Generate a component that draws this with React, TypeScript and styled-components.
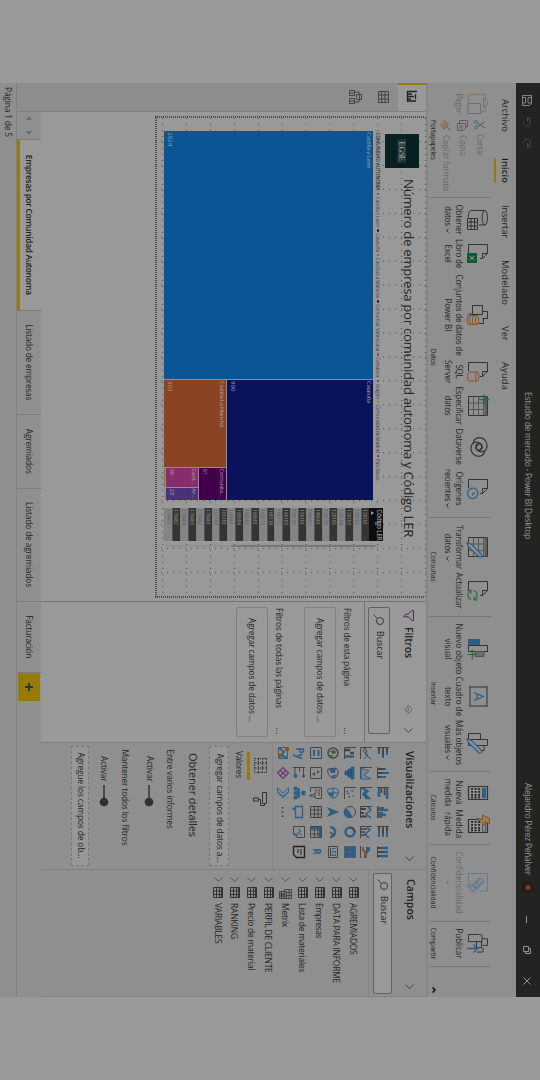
import React, { useLayoutEffect, useRef, useState } from "react";
import styled, { createGlobalStyle } from "styled-components";

const Global = createGlobalStyle`
  html, body { margin: 0; padding: 0; background: #999; }
  body { width: 540px; height: 1080px; overflow: hidden; }
  * { box-sizing: border-box; }
`;

const ink = "#262626";
const soft = "#686868";
const panel = "#8f8f8f";
const paper = "#999999";
const line = "#808080";
const blue = "#2c5f88";
const orange = "#8f5117";
const green = "#2a6b36";
const gold = "#957b0a";

/* ---------- text ---------- */

const Span = styled.span<{ $s: number; $c: string; $b: number }>`
  display: inline-block;
  flex: none;
  white-space: pre;
  line-height: 1.3;
  font-family: "Open Sans", "Noto Sans", sans-serif;
  font-size: ${(p) => p.$s}px;
  font-weight: ${(p) => p.$b};
  color: ${(p) => p.$c};
`;

type TProps = { w?: number; s?: number; c?: string; b?: number; children: string };

/* Text tracked so that it fills the given width. */
function T({ w, s = 8.4, c = ink, b = 400, children }: TProps) {
  const ref = useRef<HTMLSpanElement>(null);
  const [track, setTrack] = useState(0);
  useLayoutEffect(() => {
    if (!ref.current || !w) return;
    const natural = parseFloat(getComputedStyle(ref.current).width);
    setTrack((w - natural) / children.length);
  }, []);
  return (
    <Span ref={ref} $s={s} $c={c} $b={b} style={{ letterSpacing: `${track}px` }}>
      {children}
    </Span>
  );
}

/* ---------- icons ---------- */

const Svg = styled.svg<{ $c?: string }>`
  display: block;
  flex: none;
  overflow: visible;
  fill: none;
  stroke: ${(p) => p.$c || "#333"};
  stroke-width: 1;
`;

function Icon({ w, h = w, c, children }: { w: number; h?: number; c?: string; children: React.ReactNode }) {
  return (
    <Svg width={w} height={h} viewBox={`0 0 ${w} ${h}`} $c={c}>
      {children}
    </Svg>
  );
}

const Chevron = ({ c = "#444" }: { c?: string }) => (
  <Icon w={5} h={9} c={c}><path d="M.5 .5 4.5 4.5 .5 8.5" /></Icon>
);
const Search = () => (
  <Icon w={11} h={11} c="#3a3a3a"><circle cx="7" cy="4" r="3.5" /><path d="M4.5 6.5.5 10.5" /></Icon>
);
const doc = "M14.5 8V5.5L9.5.5H.5v19H9M9.5.5v5h5";

const DataIcon = () => (
  <Icon w={20} h={21}>
    <ellipse cx="7.7" cy="3.2" rx="7.2" ry="2.7" />
    <path d="M.5 3.2V17c0 1.5 3 2.7 7 2.7M14.9 3.2V9" />
    <path d="M8.5 10.5h11v10h-11zM8.5 13.5h11M8.5 17h11M12 10.5v10M16 10.5v10" />
  </Icon>
);
const ExcelIcon = () => (
  <Icon w={19} h={21}>
    <path d={doc} />
    <rect x="9" y="11" width="10" height="10" fill="#0d5a2c" stroke="none" />
    <path d="M12 13.5l4 5M16 13.5l-4 5" stroke="#999" />
  </Icon>
);
const PbiIcon = () => (
  <Icon w={20} h={21}>
    <path d="M6.5 5.5V.5h7v5M.5 5.5h9v10h-9zM13.5 4.5h5v5M9 15.5v4" />
    <path d="M10.5 11v8c0 2.4 9 2.4 9 0v-8M10.5 14c0 2 9 2 9 0M10.5 16.8c0 2 9 2 9 0" stroke={orange} />
    <ellipse cx="15" cy="11" rx="4.5" ry="1.6" stroke={orange} />
  </Icon>
);
const SqlIcon = () => (
  <Icon w={20} h={21}>
    <path d={doc} />
    <ellipse cx="14.5" cy="10.7" rx="4.5" ry="1.7" stroke={orange} />
    <path d="M10 10.7v8c0 2.4 9 2.4 9 0v-8" stroke={orange} />
  </Icon>
);
const TableIcon = ({ extra }: { extra?: React.ReactNode }) => (
  <Icon w={20} h={21}>
    <path d="M.5 .5h19v19H.5z" />
    <path d="M.5 2.2h19" stroke="#5d5d5d" strokeWidth="2.6" />
    <path d="M.5 4.5h19M.5 9.5h19M.5 14.5h19M7 4v15M13.5 4v15" stroke="#555" />
    {extra}
  </Icon>
);
const pencil = (
  <path d="M6 21l1.2-4.2L17.5 6.5c1.5-1 3.4.8 2.4 2.4L9.8 19.4z" fill="#8a9298" stroke={blue} strokeWidth="1.2" />
);
const SpiralIcon = () => (
  <Icon w={20} h={18}>
    <path d="M12.5 8.5a3 3 0 1 0-3 3.6c3 0 5.4-2.3 5.4-5.5C14.9 3 12 1 8.5 1 4 1 .7 4.5.7 8.7c0 3.8 2.8 6 5.8 6" strokeWidth="1.2" />
    <path d="M7.5 9.5a3 3 0 1 0 3-3.6c-3 0-5.4 2.3-5.4 5.5 0 3.6 2.9 5.6 6.4 5.6 4.5 0 7.8-3.5 7.8-7.7 0-3.8-2.8-6-5.8-6" strokeWidth="1.2" />
  </Icon>
);
const RecentIcon = () => (
  <Icon w={20} h={21}>
    <path d={doc} />
    <circle cx="14.3" cy="15.3" r="5.2" fill={panel} stroke={blue} strokeWidth="1.2" />
    <path d="M14.3 12.5v3h2.5" stroke={blue} />
  </Icon>
);
const RefreshIcon = () => (
  <Icon w={20} h={21}>
    <path d={doc} />
    <path d="M9.5 15c.5-5 7.5-5.5 9.3-1M18.5 17c-1.5 4-8 4.2-9-.5M19 10.5V14h-3.5M9.3 20.5V17h3.5" stroke={green} strokeWidth="1.2" />
  </Icon>
);
const NewVisualIcon = () => (
  <Icon w={20} h={21}>
    <rect x=".5" y="8.5" width="6" height="11" fill={blue} stroke={blue} />
    <path d="M6.5 .5h6v19h-6z" />
    <path d="M12.5 4h5v9h-5z" fill="#6d6d6d" stroke="#555" />
    <path d="M15.5 11v9.5M10.5 15.7h10" stroke={green} strokeWidth="1.2" />
  </Icon>
);
const TextBoxIcon = () => (
  <Icon w={21} h={19}>
    <path d="M1 1h19v17H1z" />
    <path d="M6.5 14 10.5 5l4 9M8 11h5" stroke={blue} strokeWidth="1.3" />
    <path d="M0 0h2v2H0zM19 0h2v2h-2zM0 17h2v2H0zM19 17h2v2h-2z" fill={blue} stroke="none" />
  </Icon>
);
const MoreVisualIcon = () => (
  <Icon w={20} h={21}>
    <path d="M.5 7.5h6v12h-6zM6.5 .5h6v19h-6zM12.5 4h5v4" />
    {pencil}
  </Icon>
);
const CalcIcon = ({ bolt }: { bolt?: boolean }) => (
  <Icon w={bolt ? 18 : 14} h={21}>
    <path d={bolt ? "M4.5 .5h13v19h-13z" : "M.5 .5h13v19H.5z"} strokeWidth="1.2" />
    <rect x={bolt ? 8 : 2.5} y="2.5" width={bolt ? 8 : 9} height="3" stroke={bolt ? "#555" : blue} fill={bolt ? "none" : blue} />
    {[8, 11.5, 15].map((y) => [2, 5, 8, 10.5].map((x) => (
      <rect key={`${x}-${y}`} x={x + (bolt ? 4 : 0)} y={y} width="1.8" height="1.9" fill="#222" stroke="none" />
    )))}
    {bolt && <path d="M3.5-1.5h5L6.5 3h4.500L3 11l1.500-5.500H0z" fill="#94805e" stroke={orange} />}
  </Icon>
);
const SensitivityIcon = () => (
  <Icon w={19} h={21} c="#5f7c8e">
    <path d="M18 8V.5H.5v19H9" />
    <path d="M4.5 8l4-4 7 7-4 4zM7 8l5 5M9 6l5 5M12 16l4-4 3 3-4 4zM10 17.5l4 4" strokeWidth="1.2" />
  </Icon>
);
const PublishIcon = () => (
  <Icon w={20} h={21}>
    <path d="M5 5.5V.5h7v5M.5 8.5c0-2 .5-2.5 1.5-2.5h6v13.5H.5zM8 6.5h6.5v5H8M14.5 5H19v6" transform="scale(.95 1)" />
    <path d="M14.5 10v10.500M10.500 16.500l4 4 4-4" stroke={blue} strokeWidth="1.300" transform="matrix(1 0 0 -1 0 31)" />
  </Icon>
);
const PasteIcon = () => (
  <Icon w={20} h={21} c="#6e6e6e">
    <path d="M11 19.5H.5V2.5H4M14 2.5h3.5V7" stroke="#93785a" strokeWidth="1.3" />
    <path d="M4.5 4.500V2.500H6.500C7-.3 11-.3 11.500 2.500H13.500v2zM9.500 7.500h10v12.500h-10z" />
  </Icon>
);
const CutIcon = () => (
  <Icon w={10} h={11} c="#5c5c5c">
    <path d="M1.5 0 7 8M8 0 2.5 8" /><circle cx="2" cy="9" r="1.5" stroke="#47728f" /><circle cx="7.5" cy="9" r="1.5" stroke="#47728f" />
  </Icon>
);
const CopyIcon = () => (
  <Icon w={11} h={11} c="#5c5c5c">
    <path d="M3 8.5H.5v-8h6.5V2M3.5 2.5h4l3 2.5v5.5h-7zM5 6h4M5 8h4" />
  </Icon>
);
const BrushIcon = () => (
  <Icon w={11} h={11} c="#5c5c5c">
    <path d="M10.5 .5 7 4M4.5 2.5l4.5 4.5-1.5 1.2-4.2-4.2z" /><path d="M3 4 .5 6l4.5 4.5L7.5 8z" fill="#967c62" stroke="#8f6c4a" />
  </Icon>
);

/* ---------- shell ---------- */

const Stage = styled.div`
  width: 1080px;
  height: 540px;
  padding: 0 83px;
  transform-origin: 0 0;
  transform: translateX(540px) rotate(90deg);
  background: ${paper};
`;
const Window = styled.div`
  width: 914px;
  height: 540px;
  display: flex;
  flex-direction: column;
  background: ${panel};
  overflow: hidden;
`;
const Slot = styled.div<{ $ml?: number }>`
  display: flex;
  flex: none;
  margin-left: ${(p) => p.$ml || 0}px;
`;
const TitleBar = styled.header`
  height: 24px;
  flex: none;
  display: flex;
  align-items: center;
  padding: 1px 12px 0 12px;
  background: #232321;
`;
const Fill = styled.div`flex: 1;`;
const Avatar = styled.div`
  width: 11px;
  height: 11px;
  border-radius: 50%;
  background: radial-gradient(circle at 50% 45%, #6b4a3e 0 1.5px, #3a1c14 3px, #24120d 6px);
`;
const TabStrip = styled.nav`
  height: 22px;
  flex: none;
  display: flex;
  padding-left: 16px;
`;
const RibbonTab = styled.div<{ $ml?: number; $on?: boolean }>`
  height: 22px;
  margin-left: ${(p) => p.$ml || 0}px;
  padding-top: 2px;
  display: flex;
  align-items: center;
  border-bottom: 2.5px solid ${(p) => (p.$on ? gold : "transparent")};
`;
const Ribbon = styled.div`
  height: 68px;
  flex: none;
  display: flex;
  padding-top: 3px;
  border-bottom: 2px solid #868686;
`;
const Group = styled.section<{ $w: number }>`
  width: ${(p) => p.$w}px;
  flex: none;
  height: 62px;
  display: flex;
  flex-direction: column;
  align-items: center;
  border-right: 1px solid #777;
`;
const GroupBody = styled.div<{ $pl?: number }>`
  height: 54px;
  flex: none;
  width: 100%;
  display: flex;
  padding-top: 3px;
  padding-left: ${(p) => p.$pl ?? 0}px;
  justify-content: ${(p) => (p.$pl == null ? "center" : "flex-start")};
`;
const Tool = styled.div<{ $w: number }>`
  width: ${(p) => p.$w}px;
  flex: none;
  display: flex;
  flex-direction: column;
  align-items: center;
`;
const ToolIcon = styled.div`height: 24px; flex: none; display: flex;`;
const ToolLine = styled.div`
  height: 11px;
  flex: none;
  display: flex;
  align-items: center;
  justify-content: center;
  gap: 2px;
`;
const SmallTools = styled.div`display: flex; flex-direction: column; width: 72px;`;
const SmallTool = styled.div`display: flex; align-items: center; height: 17px; gap: 4px;`;

const Caret = ({ c = ink }: { c?: string }) => (
  <Icon w={5} h={4} c={c}><path d="M.5 .5l2 2 2-2" /></Icon>
);

type ToolDef = { w: number; icon: React.ReactNode; a: string; aw: number; b?: string; bw?: number; caret?: boolean; dim?: boolean };
function ToolButton({ w, icon, a, aw, b, bw, caret, dim }: ToolDef) {
  const c = dim ? soft : ink;
  return (
    <Tool $w={w}>
      <ToolIcon>{icon}</ToolIcon>
      <ToolLine><T w={aw} s={8.1} c={c}>{a}</T></ToolLine>
      <ToolLine>{b && <T w={bw} s={8.1} c={c}>{b}</T>}{caret && <Caret c={c} />}</ToolLine>
    </Tool>
  );
}

const groups: { w: number; label: string; lw: number; pl?: number; tools: ToolDef[] }[] = [
  { w: 320, label: "Datos", lw: 17, pl: 5, tools: [
    { w: 34, icon: <DataIcon />, a: "Obtener", aw: 30, b: "datos", bw: 20, caret: true },
    { w: 34, icon: <ExcelIcon />, a: "Libro de", aw: 29, b: "Excel", bw: 18 },
    { w: 89, icon: <PbiIcon />, a: "Conjuntos de datos de", aw: 81, b: "Power BI", bw: 33 },
    { w: 24, icon: <SqlIcon />, a: "SQL", aw: 14, b: "Server", bw: 23 },
    { w: 44, icon: <TableIcon extra={<path d="M3.5-1.5v11M-1.5 4h11" stroke={green} strokeWidth="1.5" />} />, a: "Especificar", aw: 38, b: "datos", bw: 20 },
    { w: 38, icon: <SpiralIcon />, a: "Dataverse", aw: 36 },
    { w: 46, icon: <RecentIcon />, a: "Orígenes", aw: 34, b: "recientes", bw: 32, caret: true },
  ] },
  { w: 99, label: "Consultas", lw: 30, pl: 5, tools: [
    { w: 49, icon: <TableIcon extra={pencil} />, a: "Transformar", aw: 44, b: "datos", bw: 20, caret: true },
    { w: 38, icon: <RefreshIcon />, a: "Actualizar", aw: 36 },
  ] },
  { w: 155, label: "Insertar", lw: 23, pl: 6, tools: [
    { w: 53, icon: <NewVisualIcon />, a: "Nuevo objeto", aw: 51, b: "visual", bw: 21 },
    { w: 42, icon: <TextBoxIcon />, a: "Cuadro de", aw: 40, b: "texto", bw: 19 },
    { w: 50, icon: <MoreVisualIcon />, a: "Más objetos", aw: 45, b: "visuales", bw: 28, caret: true },
  ] },
  { w: 73, label: "Cálculos", lw: 26, pl: 5, tools: [
    { w: 32, icon: <CalcIcon />, a: "Nueva", aw: 24, b: "medida", bw: 28 },
    { w: 31, icon: <CalcIcon bolt />, a: "Medida", aw: 29, b: "rápida", bw: 24 },
  ] },
  { w: 77, label: "Confidencialidad", lw: 52, tools: [
    { w: 70, icon: <SensitivityIcon />, a: "Confidencialidad", aw: 62, caret: true, dim: true },
  ] },
  { w: 45, label: "Compartir", lw: 32, tools: [
    { w: 40, icon: <PublishIcon />, a: "Publicar", aw: 30 },
  ] },
];

/* ---------- body ---------- */

const Body = styled.div`height: 409px; flex: none; display: flex;`;
const Rail = styled.aside`
  width: 29px;
  flex: none;
  background: #8d8d8d;
  border-right: 1px solid ${line};
`;
const RailItem = styled.div<{ $on?: boolean }>`
  height: 28.2px;
  padding-right: 1px;
  display: flex;
  align-items: center;
  justify-content: center;
  background: ${(p) => (p.$on ? paper : "transparent")};
  box-shadow: inset ${(p) => (p.$on ? "2px" : "0")} 0 0 ${gold};
`;
const Main = styled.div`width: 885px; flex: none; display: flex; flex-direction: column;`;
const Work = styled.div`height: 385px; flex: none; display: flex;`;
const Canvas = styled.main`
  width: 490px;
  flex: none;
  padding-left: 4px;
  background: ${paper};
  border-right: 1px solid #747474;
`;
const Page = styled.div`
  position: relative;
  width: 481.5px;
  height: 271px;
  background:
    repeating-linear-gradient(180deg, #4c4c4c 0 1px, transparent 1px 2px) 0 2px / 2px 100% no-repeat,
    repeating-linear-gradient(180deg, #4c4c4c 0 1px, transparent 1px 2px) 100% 2px / 2px 100% no-repeat,
    repeating-linear-gradient(90deg, #4c4c4c 0 1px, transparent 1px 2px) 0 100% / 100% 2px no-repeat,
    radial-gradient(circle at .5px .5px, #4e4e4e .6px, transparent .8px) 1px 0 / 23.95px 6px,
    radial-gradient(circle at .5px .5px, #4e4e4e .6px, transparent .8px) 2px 0 / 6px 23.9px;
`;
const Visual = styled.div<{ $x: number; $y: number; $w: number; $h: number }>`
  position: absolute;
  left: ${(p) => p.$x}px;
  top: ${(p) => p.$y}px;
  width: ${(p) => p.$w}px;
  height: ${(p) => p.$h}px;
`;
const Logo = styled.div`
  width: 34px;
  height: 34px;
  display: flex;
  align-items: center;
  justify-content: center;
  background: #06211f;
`;
const LogoMark = styled.div`
  width: 24px;
  height: 9px;
  display: flex;
  align-items: center;
  justify-content: center;
  border-radius: 1px;
  background: #1c3331;
  color: #8d9392;
  font: 700 8px/9px "Liberation Serif", serif;
  letter-spacing: -0.5px;
`;
const Legend = styled.div`
  height: 9px;
  display: flex;
  align-items: center;
  padding-left: 1px;
  background: ${paper};
`;
const LegendItem = styled.div<{ $w: number }>`
  width: ${(p) => p.$w}px;
  flex: none;
  display: flex;
  align-items: center;
  gap: 1.5px;
`;
const Dot = styled.i<{ $c: string }>`
  width: 2.4px;
  height: 2.4px;
  border-radius: 50%;
  background: ${(p) => p.$c};
`;
const Tree = styled.div`display: flex; gap: 1px; height: 209.5px; background: #8f8f8f;`;
const Col = styled.div<{ $w?: number }>`
  display: flex;
  flex-direction: column;
  gap: 1px;
  ${(p) => (p.$w ? `width: ${p.$w}px; flex: none;` : "flex: 1;")}
`;
const Row = styled.div<{ $h?: number }>`
  display: flex;
  gap: 1px;
  ${(p) => (p.$h ? `height: ${p.$h}px; flex: none;` : "flex: 1;")}
`;
const CellBox = styled.div<{ $bg: string; $w?: number; $h?: number }>`
  background: ${(p) => p.$bg};
  ${(p) => (p.$w ? `width: ${p.$w}px; flex: none;` : p.$h ? `height: ${p.$h}px; flex: none;` : "flex: 1;")}
  display: flex;
  flex-direction: column;
  align-items: flex-start;
  justify-content: space-between;
  padding: 1px;
`;
function Cell({ bg, w, h, name, nw, val, vw }: { bg: string; w?: number; h?: number; name: string; nw: number; val: string; vw: number }) {
  return (
    <CellBox $bg={bg} $w={w} $h={h}>
      <T s={5.8} w={nw} c="#a3a3a3">{name}</T>
      <T s={6} w={vw} c="#a3a3a3">{val}</T>
    </CellBox>
  );
}
const YellowSliver = styled.div`height: 1px; width: 19px; background: #857a35;`;

const TableHead = styled.div`
  height: 14px;
  padding: 0 1px;
  background: #0d0d0d;
  line-height: 0;
`;
const CodeRow = styled.div<{ $dark: boolean }>`
  height: 7.87px;
  display: flex;
  align-items: center;
  padding-left: 1px;
  background: ${(p) => (p.$dark ? "#343432" : "#848484")};
  box-shadow: inset 0 -0.5px 0 #777;
`;
const Scroll = styled.div`width: 2.5px; height: 218px; background: #909090; padding-top: 7px;`;
const Thumb = styled.div`height: 145px; background: #777; border-radius: 1px;`;

const codes = ["120101", "120102", "120103", "120104", "120105", "120199", "140601", "140602", "150101", "150102", "160103", "160117", "160118", "160119", "160601", "160602", "160604", "160801", "161101", "161104", "170401", "170402", "170403", "170404", "170407", "170411"];

const legend: [string, string, number, number][] = [
  ["Castilla y León", "#0b5595", 30, 36.5],
  ["Cataluña", "#0b125c", 18.5, 24.5],
  ["Castilla La Mancha", "#a0440f", 40, 46.5],
  ["Comunitat Valenciana", "#42004a", 47, 53],
  ["Cantabria", "#982c74", 19.5, 26.5],
  ["Aragón", "#432a8c", 15.5, 21],
  ["Comunidad de Madrid", "#998000", 48, 54.5],
  ["País Vasco", "#9c1f28", 21.5, 25],
];

/* ---------- panes ---------- */

const Pane = styled.section<{ $w: number; $bg?: string }>`
  width: ${(p) => p.$w}px;
  flex: none;
  display: flex;
  flex-direction: column;
  background: ${(p) => p.$bg || panel};
  border-right: 1px solid ${line};
`;
const PaneHead = styled.div<{ $h: number; $pl: number; $pr: number }>`
  height: ${(p) => p.$h}px;
  flex: none;
  display: flex;
  align-items: center;
  padding: 0 ${(p) => p.$pr}px 1px ${(p) => p.$pl}px;
`;
const SearchBox = styled.div<{ $w: number; $h: number; $ml: number; $pl: number }>`
  width: ${(p) => p.$w}px;
  height: ${(p) => p.$h}px;
  flex: none;
  margin-left: ${(p) => p.$ml}px;
  padding-left: ${(p) => p.$pl}px;
  display: flex;
  align-items: center;
  gap: 6px;
  background: ${paper};
  border: 1px solid #626262;
  border-radius: 2px;
`;
const Rule = styled.div<{ $mt: number; $c?: string }>`
  height: 1px;
  flex: none;
  margin-top: ${(p) => p.$mt}px;
  background: ${(p) => p.$c || line};
`;
const FilterHead = styled.div<{ $mt: number }>`
  height: 12px;
  flex: none;
  margin-top: ${(p) => p.$mt}px;
  display: flex;
  align-items: center;
  justify-content: space-between;
  padding: 0 7px 0 6px;
`;
const FilterBox = styled.div`
  width: 130px;
  height: 32px;
  flex: none;
  margin: 5px 0 0 5px;
  padding-left: 10px;
  display: flex;
  align-items: center;
  border: 1px solid #808080;
  border-radius: 2px;
`;
const VizGrid = styled.div`
  display: grid;
  grid-template-columns: repeat(6, 19.67px);
  grid-auto-rows: 16.77px;
  place-items: center;
  height: 118px;
  flex: none;
  padding-left: 1px;
`;
const FieldTabs = styled.div`height: 25px; flex: none; display: flex; padding-left: 9px; gap: 5px;`;
const FieldTab = styled.div<{ $on?: boolean }>`
  width: 28px;
  height: 25px;
  display: flex;
  justify-content: center;
  padding-top: 5px;
  border-bottom: 3px solid ${(p) => (p.$on ? gold : "transparent")};
`;
const Line = styled.div<{ $h: number; $pl: number; $gap?: number }>`
  height: ${(p) => p.$h}px;
  flex: none;
  display: flex;
  align-items: center;
  gap: ${(p) => p.$gap || 0}px;
  padding-left: ${(p) => p.$pl}px;
`;
const DropBox = styled.div<{ $h: number; $pl: number }>`
  width: 120px;
  height: ${(p) => p.$h}px;
  flex: none;
  margin-left: 3px;
  padding-left: ${(p) => p.$pl}px;
  display: flex;
  align-items: center;
  background: #979797;
  border: 1px dashed #777;
`;
const FieldRow = styled.div`
  height: 16.95px;
  flex: none;
  display: flex;
  align-items: center;
  padding-left: 7px;
`;
const FieldIcon = styled.div`width: 19px; display: flex; justify-content: center; margin: 0 1px;`;

const TabBar = styled.footer`height: 24px; flex: none; display: flex; background: ${panel};`;
const Arrows = styled.div`
  width: 28px;
  display: flex;
  align-items: center;
  justify-content: space-between;
  padding: 0 4px;
  border-right: 1px solid #7c7c7c;
`;
const PageTab = styled.div<{ $w: number; $on?: boolean }>`
  width: ${(p) => p.$w}px;
  flex: none;
  display: flex;
  align-items: center;
  justify-content: center;
  background: ${(p) => (p.$on ? paper : "transparent")};
  border-right: 1px solid #7c7c7c;
  box-shadow: inset 0 ${(p) => (p.$on ? "-3px" : "0")} 0 ${gold};
`;
const AddTab = styled.div`
  width: 28px;
  height: 22px;
  margin-top: 1px;
  display: flex;
  align-items: center;
  justify-content: center;
  background: ${gold};
`;
const Status = styled.div`
  height: 17px;
  flex: none;
  display: flex;
  align-items: center;
  padding-left: 4px;
  border-top: 1px solid ${line};
`;

const g = "#444";
const b = blue;
const vizIcons: React.ReactNode[] = [
  // bars and columns
  <><path d="M.5 0v12" stroke={g} /><path d="M1 2h4M1 6h7M1 10h3" stroke={g} strokeWidth="2" /><path d="M5 2h3M8 6h3M4 10h3" stroke={b} strokeWidth="2" /></>,
  <><path d="M0 11.5h12" stroke={g} /><path d="M2 11V5M6 11V6M10 11V8" stroke={g} strokeWidth="2" /><path d="M2 5V3M6 6V0M10 8V3" stroke={b} strokeWidth="2" /></>,
  <><path d="M.5 0v12" stroke={g} /><path d="M1 2h11M1 10h9" stroke={b} strokeWidth="2.5" /><path d="M1 4.5h7M1 7.5h5" stroke={g} strokeWidth="1.5" /></>,
  <><path d="M0 11.5h12" stroke={g} /><path d="M2 11V5M7 11V6M11 11V7" stroke={g} strokeWidth="1.5" /><path d="M4 11V1M9 11V3" stroke={b} strokeWidth="2.5" /></>,
  <><path d="M.5 0v12" stroke={g} /><path d="M1 2h4M1 6h7M1 10h3" stroke={g} strokeWidth="2" /><path d="M5 2h6M8 6h3M4 10h7" stroke={b} strokeWidth="2" /></>,
  <><path d="M0 11.5h12" stroke={g} /><path d="M2 11V7M6 11V5M10 11V8" stroke={g} strokeWidth="2" /><path d="M2 7V1M6 5V1M10 8V1" stroke={b} strokeWidth="2.5" /></>,
  // lines and areas
  <><path d="M.5 0v11.5H12" stroke={g} /><path d="M1 9l3-4 3 2 5-6" stroke={g} /><path d="M1 6l3 3 4-5 4 4" stroke={b} /></>,
  <><path d="M.5 0v11.5H12" stroke={g} /><path d="M1 11 4 3l4 5 4-7v10z" fill="#7a8791" stroke={b} /></>,
  <><path d="M.5 0v11.5H12" stroke={g} /><path d="M1 8l3-5 3 3 5-5v5L7 10 4 7 1 11z" fill={b} stroke={b} strokeWidth=".5" /></>,
  <><path d="M.5 0v11.5H12" stroke={g} /><path d="M3 11V6M7 11V8M10.5 11V5" stroke={g} strokeWidth="2" /><path d="M1 4l3-3 4 5 4-5" stroke={b} strokeWidth="1.5" /></>,
  <><path d="M.5 0v11.5H12" stroke={g} /><path d="M3 11V5M6 11V7M9 11V6" stroke={g} strokeWidth="1.5" /><path d="M1 5l3-3 4 5 4-4" stroke={b} strokeWidth="1.5" /></>,
  <><path d="M0 11.5h12" stroke={g} /><path d="M1 2h3l4 3h4v3H8L4 6H1z" fill={b} stroke="none" /><path d="M1 9h3l4-3h4" stroke={orange} strokeWidth="2" /></>,
  // waterfall, funnel, scatter, pie, donut, treemap
  <><path d="M.5 0v11.5H12" stroke={g} /><path d="M3 11V6M6 6V2" stroke={g} strokeWidth="2.5" /><path d="M9.5 2v9" stroke={b} strokeWidth="2.5" /></>,
  <path d="M0 2h12v3H0zM2 5h8v3H2zM4 8h4v3H4z" fill={b} stroke="#234f73" strokeWidth=".6" />,
  <><path d="M.5 0v11.5H12" stroke={g} /><path d="M3 3h1.5v1.5H3zM8 2h1.5v1.5H8zM6 7h1.5v1.5H6z" fill={b} stroke="none" /><path d="M4 8h1.5v1.5H4zM9 6h1.5v1.5H9z" fill={g} stroke="none" /></>,
  <><circle cx="6" cy="6" r="5.5" stroke={g} /><path d="M6 6 11 3.5A5.5 5.5 0 0 1 2 10z" fill={b} stroke="none" /></>,
  <><circle cx="6" cy="6" r="4.5" stroke={b} strokeWidth="2.5" /><path d="M6 1.5A4.5 4.5 0 0 0 1.5 6" stroke={g} strokeWidth="1.5" /></>,
  <path d="M.5 .5h5v6h-5zM6.5.5h5v4h-5zM6.5 5.5h5v6h-5zM.5 7.5h5v4h-5z" fill={b} stroke="#35536b" strokeWidth=".7" />,
  // maps, gauge, card
  <><circle cx="6" cy="6" r="5" stroke={g} strokeWidth="1.5" /><path d="M3 4l3-1 1 3-3 3zM8 6l2 1-2 3z" fill={green} stroke="none" /></>,
  <><path d="M1 3c3-4 8-2 10 1v3c-3 4-7 5-9 4z" stroke={g} /><path d="M1 3l5 1v4l-4 2zM7 2l4 3-2 3z" fill={b} stroke="none" /></>,
  <><path d="M1 3c3-4 8-2 10 1v3c-3 4-7 5-9 4zM6 1v10M1 6h10" stroke={b} /><path d="M6 6h4l-2 4H6z" fill={b} stroke="none" /></>,
  <path d="M6 0l5 12-5-3-5 3z" fill="#285f7c" stroke="none" />,
  <><path d="M1 9a5 5 0 0 1 10 0" stroke={b} strokeWidth="2.5" /><path d="M6 9l3-4" stroke={g} strokeWidth="1.5" /></>,
  <><path d="M.5 1.5h11v9H.5zM2 8.5h8" stroke={g} /><path d="M2.5 3.5v3.5M5 3.5h1.5L5 7h1.5M8 3.5h1.5V7H8" stroke={b} /></>,
  // multi-row card, KPI, slicer, table, matrix, R
  <><path d="M.5 .5h11v11H.5z" stroke={g} /><path d="M3 3.5h6M3 8h6" stroke={b} strokeWidth="2" /></>,
  <><path d="M.5 .5h11v11H.5z" stroke={g} /><path d="M3 5l2-3 2 3z" fill={green} stroke="none" /><path d="M5 7h4L7 10z" fill="#8f2a2a" stroke="none" /></>,
  <><path d="M11.5 6V.5H.5v11H5M2 3h7M2 6h4" stroke={g} /><path d="M6 7h5L9 9.5V12H8V9.5z" stroke={g} /></>,
  <path d="M.5 .5h11v11H.5zM.5 4h11M.5 7.5h11M4 .5v11M8 .5v11" stroke={g} />,
  <><path d="M.5 .5h11v11H.5zM.5 4h11M.5 7.5h11M4 .5v11M8 .5v11" stroke={g} /><path d="M2 1.5v10M1 2h10" stroke={b} strokeWidth="2" /></>,
  <T s={10} b={700} c={b}>R</T>,
  // Py, influencers, tree, Q&A, narrative, report
  <T s={10} b={700} c={b}>Py</T>,
  <><path d="M.5 0v12M.5 1.5h7M.5 5.5h4M.5 10h8" stroke={g} /><circle cx="9" cy="1.5" r="1" fill={g} stroke={g} /><circle cx="9" cy="9.5" r="1.5" fill={b} stroke={b} /></>,
  <path d="M4 0h4v3H4zM0 8h3v3H0zM4.5 8h3v3h-3zM9 8h3v3H9zM6 3v5M1.5 8V5.5h9V8" fill={b} stroke={b} strokeWidth=".8" />,
  <path d="M.5 2.5h11v7H5L2.5 12V9.5h-2z" stroke={b} strokeWidth="1.3" />,
  <><path d="M.5 .5h11v7L8 11.5H.5z" stroke={g} /><path d="M3 7l2-3 2 3 2-4" stroke={b} /><path d="M8 11.5V8h3.5" stroke={g} /></>,
  <><path d="M.5 .5h11v8l-3 3h-8z" stroke="#222" strokeWidth="1.3" /><path d="M3 4h6M3 7h4" stroke="#222" /></>,
  // custom visuals
  <><path d="M.5 1.5h11v9H.5z" stroke={b} /><path d="M1 10l4-5 3 3 3-6" stroke={b} strokeWidth="2" /><path d="M0 0h4v4H0zM7 8h4v3H7z" fill={orange} stroke="none" transform="translate(0 0)" /></>,
  <path d="M6 .5 11.5 6 6 11.5.5 6zM3.3 3.3l5.4 5.4M8.7 3.3 3.3 8.7" stroke="#6b3575" strokeWidth="1.2" />,
  <path d="M1 .5h4l6 5.5-6 5.5H1L6 6zM5 .5 9 6 5 11.5" stroke={b} />,
  <path d="M1 6.5h1.5M5.300 6.5h1.5M9.5 6.5H11" stroke="#333" strokeWidth="1.5" />,
];

const VizCell = styled.div`
  width: 12px;
  height: 12px;
  display: flex;
  align-items: center;
  justify-content: center;
`;
const textual = new Set([29, 30]);

const TableGlyph = () => (
  <Icon w={11} h={10} c="#333"><path d="M.5 .5h10v9H.5zM.5 3.5h10M.5 6.5h10M4 .5v9M7.5 .5v9" /><path d="M.5 1.2h10" strokeWidth="1.6" /></Icon>
);
const MetricGlyph = () => (
  <Icon w={13} h={13} c="#444">
    <path d="M3.500 .5h9v7h-9zM3.500 3h9M6.500.5v7M9.500.5v7" /><path d="M.5 5.500h7v7h-7z" fill="#6f6f6f" transform="translate(5 0)" /><path d="M7 8h4M7 10.500h4" stroke="#222" />
  </Icon>
);

const fields: [string, number][] = [
  ["AGREMIADOS", 51.5], ["DATA PARA INFORME", 80], ["Empresas", 35], ["Lista de materiales", 69], ["Metrix", 24],
  ["PERFIL DE CLIENTE", 69.5], ["Precio de material", 67], ["RANKING", 36], ["VARIABLES", 40.5],
];

const Toggle = () => (
  <Icon w={22} h={10} c="#4a4a4a"><path d="M0 5h14" strokeWidth="2" /><circle cx="17" cy="5" r="4.3" fill="#303030" stroke="none" /></Icon>
);

export default function App() {
  return (
    <>
      <Global />
      <Stage>
        <Window>
          <TitleBar>
            <Icon w={11} h={10} c="#858585"><path d="M.5 .5h8l2 2v7H.5zM2.5 .5V4H8V.5M2.5 9.5V6.5H8v3" /></Icon>
            <Slot $ml={11}><Icon w={10} h={9} c="#474747"><path d="M1 .5v4h4M1 4.5C4 0 9.5 1.5 9 5c-.3 2-2.5 3.5-4 4" /></Icon></Slot>
            <Slot $ml={11}><Icon w={10} h={9} c="#474747"><path d="M9 .5v4H5M9 4.5C6 0 .5 1.5 1 5c.3 2 2.5 3.5 4 4" /></Icon></Slot>
            <Slot $ml={244}><T w={147} s={8.4} c="#969696">Estudio de mercado - Power BI Desktop</T></Slot>
            <Fill />
            <T w={92} s={8.4} c="#969696">Alejandro Pérez Peñalver</T>
            <Slot $ml={7}><Avatar /></Slot>
            <Slot $ml={23}><Icon w={7} h={8} c="#909090"><path d="M0 4.5h7" /></Icon></Slot>
            <Slot $ml={23}><Icon w={8} h={8} c="#909090"><path d="M.5 2.5h5v5h-5zM2.5 2V.5h5v5H6" /></Icon></Slot>
            <Slot $ml={23}><Icon w={8} h={8} c="#909090"><path d="M.5 .5l7 7M7.5 .5l-7 7" /></Icon></Slot>
          </TitleBar>
          <TabStrip>
            <RibbonTab><T w={33} s={9.4}>Archivo</T></RibbonTab>
            <RibbonTab $ml={26} $on><T w={25} s={9.4} b={600} c="#1c1c1c">Inicio</T></RibbonTab>
            <RibbonTab $ml={22}><T w={33} s={9.4}>Insertar</T></RibbonTab>
            <RibbonTab $ml={22}><T w={45} s={9.4}>Modelado</T></RibbonTab>
            <RibbonTab $ml={21}><T w={15} s={9.4}>Ver</T></RibbonTab>
            <RibbonTab $ml={21}><T w={28} s={9.4}>Ayuda</T></RibbonTab>
          </TabStrip>
          <Ribbon>
            <Group $w={114.5}>
              <GroupBody $pl={4}>
                <Tool $w={33}>
                  <ToolIcon><PasteIcon /></ToolIcon>
                  <ToolLine><T w={20} s={8.1} c={soft}>Pegar</T></ToolLine>
                </Tool>
                <SmallTools>
                  <SmallTool><CutIcon /><T w={23} s={8.1} c={soft}>Cortar</T></SmallTool>
                  <SmallTool><CopyIcon /><T w={21} s={8.1} c={soft}>Copia</T></SmallTool>
                  <SmallTool><BrushIcon /><T w={56} s={8.1} c={soft}>Copiar formato</T></SmallTool>
                </SmallTools>
              </GroupBody>
              <T w={40} s={6.8}>Portapapeles</T>
            </Group>
            {groups.map((gr) => (
              <Group key={gr.label} $w={gr.w}>
                <GroupBody $pl={gr.pl}>{gr.tools.map((t) => <ToolButton key={t.a} {...t} />)}</GroupBody>
                <T w={gr.lw} s={6.8}>{gr.label}</T>
              </Group>
            ))}
            <Slot $ml={20}><Line $h={114} $pl={0}><Icon w={6} h={4} c="#111"><path d="M.5 3.5 3 1l2.500 2.500" strokeWidth="1.5" /></Icon></Line></Slot>
          </Ribbon>
          <Body>
            <Rail>
              <RailItem $on><Icon w={11} h={10} c="#222"><path d="M.5 0v9.5H11M3 9V5M5.5 9V3M8 9V6M10 9V1M3 1.500h5" strokeWidth="1.3" /></Icon></RailItem>
              <RailItem><Icon w={12} h={11} c="#444"><path d="M.5 .5h11v10H.5zM.5 4h11M.5 7.3h11M4 .5v10M8 .5v10" /></Icon></RailItem>
              <RailItem><Icon w={14} h={13} c="#444"><path d="M4.5 .5h5v5h-5zM4.5 2.5h5M.5 7.5h5v5h-5zM3 7.500v5M8.5 7.5h5v5h-5zM11 7.500v5M4 3H2v4M10 3h2v4" /></Icon></RailItem>
            </Rail>
            <Main>
              <Work>
                <Canvas>
                  <Page>
                    <Visual $x={18} $y={7.3} $w={34} $h={34}><Logo><LogoMark>EGSE</LogoMark></Logo></Visual>
                    <Visual $x={63} $y={8} $w={360} $h={20}><T w={358} s={13.2} c="#262626">Número de empresa por comunidad autonoma y Código LER</T></Visual>
                    <Visual $x={15.3} $y={43.5} $w={367.5} $h={219}>
                      <Legend>
                        <LegendItem $w={60.5}><T w={58} s={5} b={600} c="#333">COMUNIDAD AUTONOMA</T></LegendItem>
                        {legend.map(([n, c, w, adv]) => (
                          <LegendItem key={n} $w={adv}><Dot $c={c} /><T w={w} s={5} c="#444">{n}</T></LegendItem>
                        ))}
                      </Legend>
                      <Tree>
                        <Cell bg="#0b5595" w={247.8} name="Castilla y León" nw={36} val="2924" vw={14} />
                        <Col>
                          <Cell bg="#0b125c" h={146.5} name="Cataluña" nw={22} val="990" vw={10.5} />
                          <Row>
                            <Cell bg="#8b4423" w={86.5} name="Castilla-La Mancha" nw={46} val="303" vw={10.5} />
                            <Col>
                              <Cell bg="#42004a" h={27} name="Comunita..." nw={28} val="51" vw={6.5} />
                              <Row>
                                <Cell bg="#872c6c" w={19} name="Cant..." nw={16} val="36" vw={6.5} />
                                <Cell bg="#493279" name="Ar..." nw={10} val="23" vw={6.5} />
                              </Row>
                              <YellowSliver />
                            </Col>
                          </Row>
                        </Col>
                      </Tree>
                    </Visual>
                    <Visual $x={392.3} $y={43.3} $w={33} $h={219}>
                      <TableHead>
                        <T w={31} s={6.6} b={600} c="#999">Código LER</T>
                        <Slot $ml={2}><Icon w={4} h={3}><path d="M0 3 2 0l2 3z" fill="#999" stroke="none" /></Icon></Slot>
                      </TableHead>
                      {codes.map((c, i) => (
                        <CodeRow key={c} $dark={i % 2 === 0}><T w={15.5} s={5} c={i % 2 ? "#5c5c5c" : "#999"}>{c}</T></CodeRow>
                      ))}
                    </Visual>
                    <Visual $x={428.7} $y={43} $w={3} $h={218}><Scroll><Thumb /></Scroll></Visual>
                  </Page>
                </Canvas>
                <Pane $w={140.5} $bg={paper}>
                  <PaneHead $h={36} $pl={8} $pr={9}>
                    <Icon w={11} h={11}><path d="M.5 .5h10v1.5L6.8 6v4.5L4.3 8.5V6L.5 2z" stroke="#4a2c50" /></Icon>
                    <Slot $ml={6}><T w={31} s={10.6} b={600} c="#222">Filtros</T></Slot>
                    <Fill />
                    <Icon w={9} h={8} c="#666"><path d="M.5 5C1 -1 8 -1 8.5 5" /><circle cx="4.5" cy="5" r="1.8" /></Icon>
                    <Slot $ml={14}><Chevron /></Slot>
                  </PaneHead>
                  <SearchBox $w={126.5} $h={22} $ml={5} $pl={6}><Search /><T w={28} s={8.8}>Buscar</T></SearchBox>
                  <Rule $mt={2.5} $c="#747474" />
                  <FilterHead $mt={11.5}><T w={78}>Filtros de esta página</T><T w={7}>...</T></FilterHead>
                  <FilterBox><T w={104}>Agregar campos de datos ...</T></FilterBox>
                  <FilterHead $mt={19}><T w={100}>Filtros de todas las páginas</T><T w={7}>...</T></FilterHead>
                  <FilterBox><T w={104}>Agregar campos de datos ...</T></FilterBox>
                </Pane>
                <Pane $w={127.5}>
                  <PaneHead $h={34.5} $pl={8.5} $pr={8}>
                    <T w={77.5} s={10.4} b={600} c="#222">Visualizaciones</T><Fill /><Chevron />
                  </PaneHead>
                  <VizGrid>
                    {vizIcons.map((v, i) => (
                      <VizCell key={i}>{textual.has(i) ? v : <Icon w={12}>{v}</Icon>}</VizCell>
                    ))}
                  </VizGrid>
                  <Rule $mt={0} $c="#858585" />
                  <FieldTabs>
                    <FieldTab $on><Icon w={15} h={13} c="#333"><path d="M.5 .5h14v12H.5zM.5 4.5h14M.5 8.5h14M5 .5v12M10 .5v12" strokeDasharray="1.5 1" /></Icon></FieldTab>
                    <FieldTab><Icon w={14} h={14} c="#333"><path d="M.5 .5h11v4H.5zM11.5 2.5H13.5V6.5H7.5V8M6 8.5h3v5H6z" /></Icon></FieldTab>
                  </FieldTabs>
                  <Line $h={18} $pl={8.5}><T w={27} s={8.2}>Valores</T></Line>
                  <DropBox $h={20} $pl={7}><T w={109}>Agregar campos de datos a...</T></DropBox>
                  <Line $h={33} $pl={10.5}><T w={84} s={11} b={500} c="#262626">Obtener detalles</T></Line>
                  <Line $h={14} $pl={7}><T w={79}>Entre varios informes</T></Line>
                  <Line $h={26} $pl={13.5} $gap={3}><T w={25.5}>Activar</T><Toggle /></Line>
                  <Line $h={24} $pl={7}><T w={96}>Mantener todos los filtros</T></Line>
                  <Line $h={17} $pl={13.5} $gap={3}><T w={25.5}>Activar</T><Toggle /></Line>
                  <Line $h={6} $pl={0} />
                  <DropBox $h={18} $pl={6}><T w={106}>Agregue los campos de ob...</T></DropBox>
                </Pane>
                <Pane $w={127}>
                  <PaneHead $h={33.5} $pl={9} $pr={7}>
                    <T w={41} s={10.6} b={600} c="#222">Campos</T><Fill /><Chevron />
                  </PaneHead>
                  <SearchBox $w={120.5} $h={19} $ml={3} $pl={5}><Search /><T w={28} s={8.8}>Buscar</T></SearchBox>
                  <Rule $mt={4} $c="#868686" />
                  <Line $h={6.5} $pl={0} />
                  {fields.map(([n, w]) => (
                    <FieldRow key={n}>
                      <Chevron c="#555" />
                      <FieldIcon>{n === "Metrix" ? <MetricGlyph /> : <TableGlyph />}</FieldIcon>
                      <T w={w} s={8.5}>{n}</T>
                    </FieldRow>
                  ))}
                </Pane>
              </Work>
              <TabBar>
                <Arrows>
                  <Icon w={4} h={6}><path d="M4 0v6L0 3z" fill="#6d6d6d" stroke="none" /></Icon>
                  <Icon w={4} h={6}><path d="M0 0v6l4-3z" fill="#6d6d6d" stroke="none" /></Icon>
                </Arrows>
                <PageTab $w={170.5} $on><T w={140} b={600} c="#1e1e1e">Empresas por Comunidad Autonoma</T></PageTab>
                <PageTab $w={104.5}><T w={76}>Listado de empresas</T></PageTab>
                <PageTab $w={73.5}><T w={45}>Agremiados</T></PageTab>
                <PageTab $w={113}><T w={85}>Listado de agremiados</T></PageTab>
                <PageTab $w={71.5}><T w={43}>Facturación</T></PageTab>
                <AddTab><Icon w={8} h={8} c="#333"><path d="M4 0v8M0 4h8" strokeWidth="2" /></Icon></AddTab>
              </TabBar>
            </Main>
          </Body>
          <Status><T w={50}>Página 1 de 5</T></Status>
        </Window>
      </Stage>
    </>
  );
}
